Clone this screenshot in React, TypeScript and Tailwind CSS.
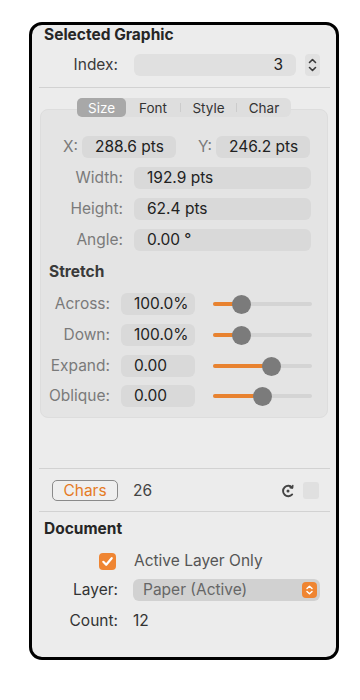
import React from "react";

const font = { fontFamily: "Inter, 'Noto Sans', 'Liberation Sans', sans-serif" };

function Field({ w, children }: { w: string; children: React.ReactNode }) {
  return (
    <div className={`${w} h-[22px] rounded-[6px] bg-[#d9d9d9] flex items-center pl-[13px] text-[#222] overflow-hidden whitespace-nowrap`}>
      {children}
    </div>
  );
}

function Slider({ pos }: { pos: number }) {
  return (
    <div className="relative w-[99px] h-[22px] flex items-center">
      <div className="w-full h-[4px] rounded-full bg-[#d4d4d4]" />
      <div className="absolute left-0 h-[4px] rounded-full bg-[#e8822f]" style={{ width: pos }} />
      <div className="absolute w-[19px] h-[19px] rounded-full bg-[#7b7b7b]" style={{ left: pos - 9.5 }} />
    </div>
  );
}

function StretchRow({ label, value, pos, mt }: { label: string; value: string; pos: number; mt: string }) {
  return (
    <div className={`flex items-center h-[22px] ${mt}`}>
      <div className="w-[69px] text-right text-[#7a7a7a]">{label}</div>
      <div className="ml-[11px] w-[74px] h-[22px] rounded-[6px] bg-[#d9d9d9] flex items-center pl-[13px] text-[#222] overflow-hidden whitespace-nowrap">
        {value}
      </div>
      <div className="ml-[18px]">
        <Slider pos={pos} />
      </div>
    </div>
  );
}

function LabelRow({ label, value, mt }: { label: string; value: string; mt: string }) {
  return (
    <div className={`flex items-center h-[22px] ${mt}`}>
      <div className="w-[82px] text-right text-[#7a7a7a]">{label}</div>
      <div className="ml-[11px]">
        <Field w="w-[177px]">{value}</Field>
      </div>
    </div>
  );
}

export default function App() {
  return (
    <div className="w-[360px] min-h-[700px] bg-white pt-[22px] pl-[29px]" style={font}>
      <div className="w-[310px] h-[638px] border-[3px] border-black rounded-[13px] bg-[#ececec] flex flex-col text-[15.5px] leading-[18px]">
        {/* Title */}
        <div className="h-[18px] mt-[1px] pl-[12px] font-bold text-[#262626]">Selected Graphic</div>

        {/* Index */}
        <div className="flex items-center h-[22px] mt-[10px]">
          <div className="w-[86px] text-right text-[#3a3a3a]">Index:</div>
          <div className="ml-[16px] w-[162px] h-[22px] rounded-[6px] bg-[#e0e0e0] flex items-center justify-end pr-[13px] text-[#222]">3</div>
          <div className="ml-[9px] w-[15px] h-[22px] rounded-[4px] bg-[#e1e1e1] flex items-center justify-center">
            <svg width="15" height="22" viewBox="0 0 15 22">
              <path d="M4.5 8.5 L7.5 5.5 L10.5 8.5" fill="none" stroke="#3a3a3a" strokeWidth="1.6" strokeLinecap="round" strokeLinejoin="round" />
              <path d="M4.5 13.5 L7.5 16.5 L10.5 13.5" fill="none" stroke="#3a3a3a" strokeWidth="1.6" strokeLinecap="round" strokeLinejoin="round" />
            </svg>
          </div>
        </div>

        {/* Separator */}
        <div className="h-px mt-[11px] ml-[7px] mr-[6px] bg-[#d2d2d2]" />

        {/* Group box */}
        <div className="mt-[21px] ml-[8px] w-[288px] rounded-[8px] bg-[#e4e4e4] border border-[#dddddd] flex flex-col pb-[10px]">
          {/* tabs */}
          <div className="-mt-[12px] self-center flex items-center h-[19px] w-[214px] rounded-[6px] bg-[#dedede] text-[13.5px] text-[#333]">
            <div className="w-[49px] h-[19px] rounded-[5px] bg-[#a8a8a8] text-white flex items-center justify-center">Size</div>
            <div className="w-[54px] flex items-center justify-center">Font</div>
            <div className="w-px h-[9px] bg-[#cccccc]" />
            <div className="w-[55px] flex items-center justify-center">Style</div>
            <div className="w-px h-[9px] bg-[#cccccc]" />
            <div className="w-[54px] flex items-center justify-center">Char</div>
          </div>

          {/* X / Y */}
          <div className="flex items-center h-[22px] mt-[19px]">
            <div className="w-[37px] text-right text-[#7a7a7a]">X:</div>
            <div className="ml-[4px]">
              <Field w="w-[94px]">288.6 pts</Field>
            </div>
            <div className="w-[36px] text-right text-[#7a7a7a]">Y:</div>
            <div className="ml-[4px]">
              <Field w="w-[94px]">246.2 pts</Field>
            </div>
          </div>

          <LabelRow label="Width:" value="192.9 pts" mt="mt-[9px]" />
          <LabelRow label="Height:" value="62.4 pts" mt="mt-[9px]" />
          <LabelRow label="Angle:" value="0.00 °" mt="mt-[9px]" />

          <div className="h-[18px] mt-[12px] pl-[8px] font-bold text-[#3a3a3a]">Stretch</div>

          <StretchRow label="Across:" value="100.0%" pos={28} mt="mt-[12px]" />
          <StretchRow label="Down:" value="100.0%" pos={28} mt="mt-[9px]" />
          <StretchRow label="Expand:" value="0.00" pos={58} mt="mt-[9px]" />
          <StretchRow label="Oblique:" value="0.00" pos={49} mt="mt-[8px]" />
        </div>

        {/* Separator */}
        <div className="h-px mt-[50px] ml-[7px] mr-[6px] bg-[#d2d2d2]" />

        {/* Chars row */}
        <div className="flex items-center h-[21px] mt-[11px]">
          <div className="ml-[20px] w-[66px] h-[21px] rounded-[5px] border-[1.5px] border-[#8a8a8a] bg-[#efefef] flex items-center justify-center text-[#e57b25]">
            Chars
          </div>
          <div className="ml-[15px] text-[#444]">26</div>
          <div className="ml-auto flex items-center">
            <svg width="14" height="14" viewBox="0 0 14 14">
              <path d="M11.2 3.6 A5.2 5.2 0 1 0 11.2 10.4" fill="none" stroke="#444" strokeWidth="1.9" strokeLinecap="round" />
              <path d="M11.8 1.6 L11.5 4 L9.1 3.7" fill="none" stroke="#444" strokeWidth="1.5" strokeLinecap="round" strokeLinejoin="round" />
              <circle cx="7" cy="7" r="1.5" fill="#444" />
            </svg>
            <div className="ml-[8px] mr-[17px] w-[16px] h-[17px] rounded-[3px] bg-[#e0e0e0]" />
          </div>
        </div>

        {/* Separator */}
        <div className="h-px mt-[10px] ml-[7px] mr-[6px] bg-[#d2d2d2]" />

        {/* Document */}
        <div className="h-[18px] mt-[8px] pl-[12px] font-bold text-[#262626]">Document</div>

        {/* Active layer only */}
        <div className="flex items-center h-[22px] mt-[12px]">
          <div className="ml-[67px] w-[17px] h-[17px] rounded-[4px] bg-[#ef8532] flex items-center justify-center">
            <svg width="17" height="17" viewBox="0 0 17 17">
              <path d="M4.3 8.8 L7.2 11.8 L12.7 5.2" fill="none" stroke="white" strokeWidth="2.2" strokeLinecap="round" strokeLinejoin="round" />
            </svg>
          </div>
          <div className="ml-[18px] text-[#555]">Active Layer Only</div>
        </div>

        {/* Layer */}
        <div className="flex items-center h-[22px] mt-[7px]">
          <div className="w-[86px] text-right text-[#333]">Layer:</div>
          <div className="ml-[15px] w-[187px] h-[22px] rounded-[6px] bg-[#d1d1d1] flex items-center pl-[10px] pr-[3px] text-[#666]">
            <span>Paper (Active)</span>
            <div className="ml-auto w-[15px] h-[16px] rounded-[4px] bg-[#ef8532] flex items-center justify-center">
              <svg width="15" height="16" viewBox="0 0 15 16">
                <path d="M5 6.5 L7.5 4.2 L10 6.5" fill="none" stroke="white" strokeWidth="1.5" strokeLinecap="round" strokeLinejoin="round" />
                <path d="M5 9.5 L7.5 11.8 L10 9.5" fill="none" stroke="white" strokeWidth="1.5" strokeLinecap="round" strokeLinejoin="round" />
              </svg>
            </div>
          </div>
        </div>

        {/* Count */}
        <div className="flex items-center h-[22px] mt-[9px]">
          <div className="w-[86px] text-right text-[#333]">Count:</div>
          <div className="ml-[15px] text-[#333]">12</div>
        </div>
      </div>
    </div>
  );
}
